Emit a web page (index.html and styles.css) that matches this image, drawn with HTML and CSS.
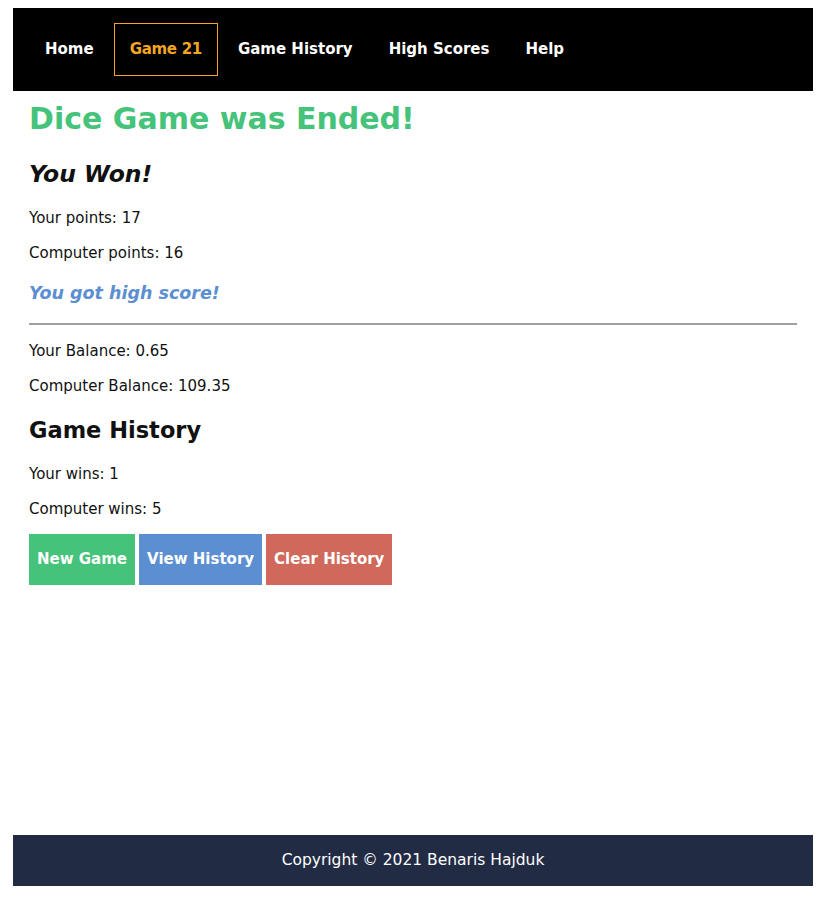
FILE: index.html
```html
<!DOCTYPE html>
<html lang="en">
<head>
<meta charset="utf-8">
<title>Game 21</title>
<link rel="stylesheet" href="styles.css">
</head>
<body>
<div class="page">
  <nav class="navbar">
    <a class="nav-link" href="#">Home</a>
    <a class="nav-link active" href="#">Game 21</a>
    <a class="nav-link" href="#">Game History</a>
    <a class="nav-link" href="#">High Scores</a>
    <a class="nav-link" href="#">Help</a>
  </nav>
  <main class="content">
    <h1 class="title">Dice Game was Ended!</h1>
    <h2 class="result"><em>You Won!</em></h2>
    <p>Your points: 17</p>
    <p>Computer points: 16</p>
    <h3 class="highscore"><em>You got high score!</em></h3>
    <hr class="divider">
    <p>Your Balance: 0.65</p>
    <p>Computer Balance: 109.35</p>
    <h2 class="section">Game History</h2>
    <p>Your wins: 1</p>
    <p>Computer wins: 5</p>
    <div class="buttons">
      <button class="btn btn-green">New Game</button>
      <button class="btn btn-blue">View History</button>
      <button class="btn btn-red">Clear History</button>
    </div>
  </main>
  <footer class="footer">Copyright © 2021 Benaris Hajduk</footer>
</div>
</body>
</html>
```
FILE: styles.css
```css
html, body {
  margin: 0;
  padding: 0;
  background: #fff;
}
body {
  padding: 8px 15px 15px 13px;
  font-family: "DejaVu Sans", sans-serif;
  color: #111;
}
.page {
  width: 800px;
  min-height: calc(100vh - 23px);
  display: flex;
  flex-direction: column;
}
.navbar {
  background: #000;
  padding: 15px 16px;
  display: flex;
  align-items: center;
  gap: 4px;
}
.nav-link {
  display: block;
  color: #fff;
  text-decoration: none;
  font-weight: bold;
  font-size: 15px;
  line-height: 19px;
  padding: 16px;
}
.nav-link.active {
  color: #f5a623;
  border: 1px solid #f5a623;
  padding: 16px 15px;
  letter-spacing: -0.3px;
}
.content {
  flex: 1;
  padding: 0 16px;
}
.title {
  color: #45c37a;
  font-size: 30px;
  line-height: 38px;
  margin: 9px 0 22px;
}
.result {
  font-size: 23.5px;
  line-height: 28px;
  margin: 0 0 21px;
}
p {
  font-size: 15px;
  line-height: 19px;
  margin: 0 0 16px;
}
.highscore {
  color: #5c8fd2;
  font-size: 17.5px;
  line-height: 24px;
  margin: 18px 0 18px;
}
.divider {
  border: 0;
  border-top: 2px solid #a0a0a0;
  margin: 0 0 17px;
}
.section {
  font-size: 22.5px;
  line-height: 28px;
  margin: 20px 0 21px;
}
.buttons {
  display: flex;
  gap: 4px;
  margin-top: -1px;
}
.btn {
  border: 0;
  color: #fff;
  font-family: inherit;
  font-weight: bold;
  font-size: 15px;
  line-height: 19px;
  padding: 16px 8px;
  cursor: pointer;
}
.btn-green { background: #45c37a; }
.btn-blue { background: #5c8fd2; }
.btn-red { background: #d0695b; }
.footer {
  background: #222b44;
  color: #fff;
  text-align: center;
  font-size: 15.5px;
  line-height: 19px;
  padding: 16px;
}
```
